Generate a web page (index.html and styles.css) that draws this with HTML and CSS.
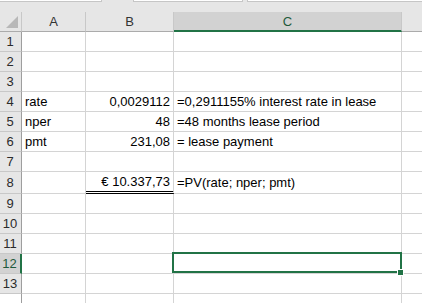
FILE: index.html
```html
<!DOCTYPE html>
<html>
<head>
<meta charset="utf-8">
<link rel="stylesheet" href="styles.css">
</head>
<body>
<div class="topbar">
  <div class="box box1"></div>
  <div class="box box2"></div>
  <div class="box box3"></div>
</div>
<div class="sheet">
  <div class="hd corner"><svg width="21" height="19" viewBox="0 0 21 19"><polygon points="18,4 18,16 6,16" fill="#b8b8b8"/></svg></div>
  <div class="hd col">A</div>
  <div class="hd col">B</div>
  <div class="hd col sel">C</div>
  <div class="hd col last"></div>

  <div class="rh">1</div><div class="c"></div><div class="c"></div><div class="c"></div><div class="c d"></div>
  <div class="rh">2</div><div class="c"></div><div class="c"></div><div class="c"></div><div class="c d"></div>
  <div class="rh">3</div><div class="c"></div><div class="c"></div><div class="c"></div><div class="c d"></div>
  <div class="rh">4</div><div class="c">rate</div><div class="c num">0,0029112</div><div class="c">=0,2911155% interest rate in lease</div><div class="c d"></div>
  <div class="rh">5</div><div class="c">nper</div><div class="c num">48</div><div class="c">=48 months lease period</div><div class="c d"></div>
  <div class="rh">6</div><div class="c">pmt</div><div class="c num">231,08</div><div class="c">= lease payment</div><div class="c d"></div>
  <div class="rh">7</div><div class="c"></div><div class="c"></div><div class="c"></div><div class="c d"></div>
  <div class="rh tall">8</div><div class="c tall"></div><div class="c num dbl">€ 10.337,73</div><div class="c tall">=PV(rate; nper; pmt)</div><div class="c d tall"></div>
  <div class="rh">9</div><div class="c"></div><div class="c"></div><div class="c"></div><div class="c d"></div>
  <div class="rh">10</div><div class="c"></div><div class="c"></div><div class="c"></div><div class="c d"></div>
  <div class="rh">11</div><div class="c"></div><div class="c"></div><div class="c"></div><div class="c d"></div>
  <div class="rh rsel">12</div><div class="c"></div><div class="c"></div><div class="c active"><div class="selbox"></div><div class="handle"></div></div><div class="c d"></div>
  <div class="rh">13</div><div class="c"></div><div class="c"></div><div class="c"></div><div class="c d"></div>
  <div class="rh blank"></div><div class="c"></div><div class="c"></div><div class="c"></div><div class="c d"></div>
</div>
</body>
</html>
```
FILE: styles.css
```css
html, body {
  margin: 0;
  padding: 0;
  background: #ffffff;
  overflow: hidden;
  width: 422px;
  height: 303px;
}
body {
  font-family: "Liberation Sans", Arial, sans-serif;
  font-size: 13px;
  color: #000;
}
.topbar {
  height: 12px;
  background: #e6e6e6;
  display: flex;
  align-items: flex-start;
}
.box {
  height: 1px;
  background: #fff;
  border: 1px solid #c6c6c6;
  border-top: none;
}
.box1 { width: 101px; border-left: none; }
.box2 { width: 108px; margin-left: 31px; }
.box3 { flex: 1; margin-left: 4px; border-right: none; }
.sheet {
  display: grid;
  grid-template-columns: 22px 64px 88px 228px 1fr;
  grid-template-rows: repeat(8, 20px) 22px repeat(6, 20px);
}
.hd, .rh, .c {
  box-sizing: border-box;
  white-space: nowrap;
  overflow: visible;
  line-height: 20px;
}
.hd {
  background: #e6e6e6;
  border-bottom: 1px solid #ababab;
  border-right: 1px solid #c8c8c8;
  text-align: center;
  color: #333;
  line-height: 19px;
}
.hd.corner svg { display: block; }
.hd.sel {
  background: #d2d2d2;
  border-bottom: 2px solid #217346;
  color: #1f5a3c;
}
.hd.last { border-right: none; }
.rh {
  background: #e6e6e6;
  border-right: 1px solid #9e9e9e;
  border-bottom: 1px solid #c8c8c8;
  text-align: center;
  color: #2b2b2b;
  padding-right: 1px;
}
.rh.rsel {
  background: #d2d2d2;
  border-right: 2px solid #217346;
  color: #1f5a3c;
}
.rh.blank { background: #fff; border-bottom: none; }
.c {
  border-right: 1px solid #d4d4d4;
  border-bottom: 1px solid #d4d4d4;
  padding: 0 2px 0 3px;
  background: #fff;
}
.c.d { border-right: none; }
.c.num { text-align: right; padding-right: 3px; }
.tall { line-height: 22px; }
.c.dbl {
  border-bottom: 3px double #000;
  line-height: 20px;
}
.active { position: relative; }
.selbox {
  position: absolute;
  top: -2px;
  left: -2px;
  right: -1px;
  bottom: 0;
  border: 2px solid #217346;
}
.handle {
  position: absolute;
  right: -3px;
  bottom: -3px;
  width: 5px;
  height: 5px;
  background: #217346;
  border: 1px solid #fff;
}
```
